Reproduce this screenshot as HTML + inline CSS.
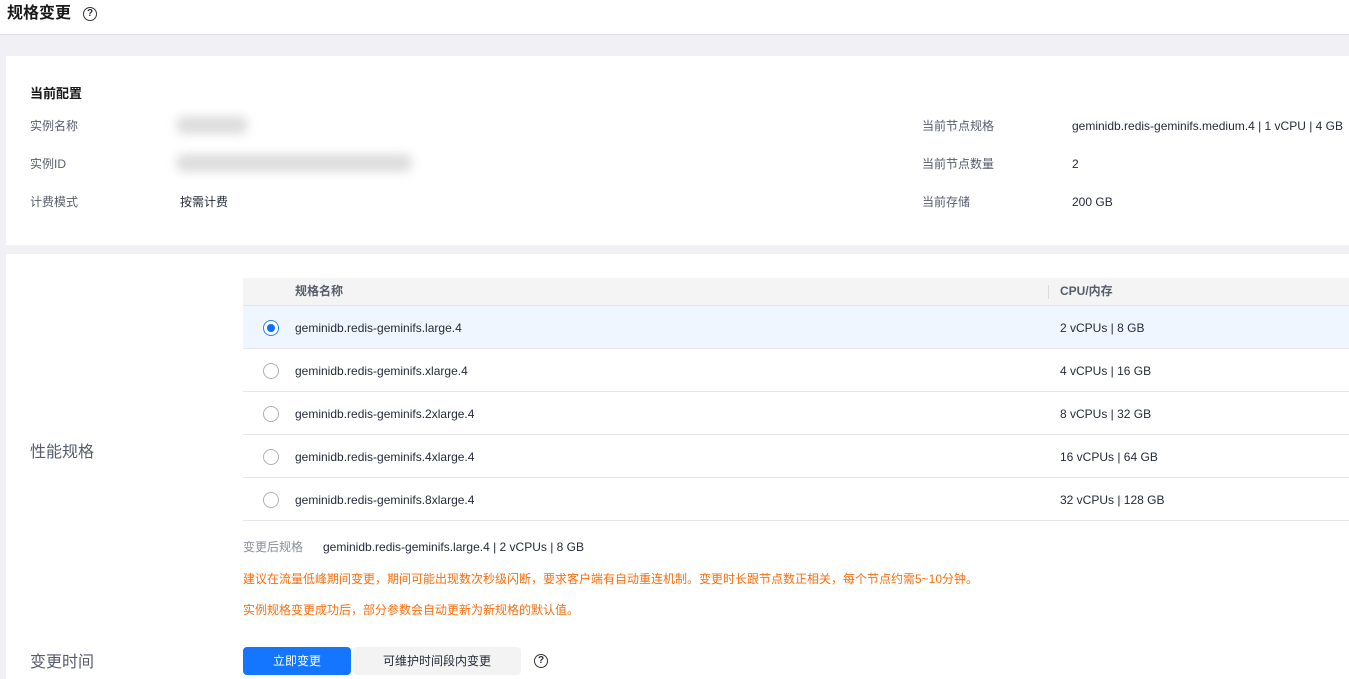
<!DOCTYPE html>
<html><head><meta charset="utf-8"><style>
*{margin:0;padding:0;box-sizing:border-box}
body{width:1349px;height:679px;overflow:hidden;background:#f0f0f5;font-family:"Liberation Sans","Noto Sans CJK SC",sans-serif;font-size:12px;line-height:14px;color:#252b3a;position:relative}
.abs{position:absolute;white-space:nowrap}
.top{position:absolute;left:0;top:0;width:1349px;height:35px;background:#fff;border-bottom:1px solid #dfe1e6}
.p1{position:absolute;left:6px;top:56px;width:1343px;height:189px;background:#fff}
.p2{position:absolute;left:6px;top:254px;width:1343px;height:425px;background:#fff}
.lbl{color:#575d6c}
.blur{position:absolute;background:#ddd;filter:blur(5px);border-radius:8px}
.row{position:absolute;left:243px;width:1106px;height:43px;border-bottom:1px solid #e4e6eb}
.row span{position:absolute;top:15px}
.radio{position:absolute;left:20px;top:14px;width:16px;height:16px;border:1px solid #adb0b8;border-radius:50%;background:#fff}
.q{display:inline-block;width:14px;height:14px;border:1.3px solid #333;border-radius:50%;font-size:10px;line-height:12px;text-align:center;font-weight:bold}
.warn{color:#f66f0f}
.big{font-size:16px;line-height:18px}
</style></head><body>
<div class="top"></div>
<div class="abs big" style="left:7px;top:5px;font-weight:bold;color:#191919">规格变更</div>
<div class="abs q" style="left:83px;top:7px">?</div>
<div class="p1"></div>
<div class="abs" style="left:30px;top:86px;font-size:13px;line-height:15px;font-weight:bold;color:#191919">当前配置</div>
<div class="abs lbl" style="left:30px;top:119px">实例名称</div>
<div class="abs lbl" style="left:30px;top:157px">实例ID</div>
<div class="abs lbl" style="left:30px;top:195px">计费模式</div>
<div class="blur" style="left:176px;top:116px;width:72px;height:18px"></div>
<div class="blur" style="left:176px;top:154px;width:236px;height:18px"></div>
<div class="abs" style="left:180px;top:195px">按需计费</div>
<div class="abs lbl" style="left:922px;top:119px">当前节点规格</div>
<div class="abs lbl" style="left:922px;top:157px">当前节点数量</div>
<div class="abs lbl" style="left:922px;top:195px">当前存储</div>
<div class="abs" style="left:1072px;top:119px">geminidb.redis-geminifs.medium.4 | 1 vCPU | 4 GB</div>
<div class="abs" style="left:1072px;top:157px">2</div>
<div class="abs" style="left:1072px;top:195px">200 GB</div>
<div class="p2"></div>
<div class="abs lbl big" style="left:30px;top:444px">性能规格</div>
<div class="row" style="top:278px;height:28px;background:#f4f4f4;border-bottom:1px solid #e4e6eb">
<span style="left:52px;top:6px;color:#575d6c;font-weight:bold">规格名称</span>
<div style="position:absolute;left:805px;top:7px;width:1px;height:14px;background:#dcdcdc"></div>
<span style="left:817px;top:6px;color:#575d6c;font-weight:bold">CPU/内存</span></div>
<div class="row" style="top:306px;background:#f0f6ff"><div class="radio" style="border-color:#2d7eff"><div style="position:absolute;left:3px;top:3px;width:8px;height:8px;border-radius:50%;background:#0d6dfc"></div></div><span style="left:52px">geminidb.redis-geminifs.large.4</span><span style="left:817px">2 vCPUs | 8 GB</span></div>
<div class="row" style="top:349px"><div class="radio"></div><span style="left:52px">geminidb.redis-geminifs.xlarge.4</span><span style="left:817px">4 vCPUs | 16 GB</span></div>
<div class="row" style="top:392px"><div class="radio"></div><span style="left:52px">geminidb.redis-geminifs.2xlarge.4</span><span style="left:817px">8 vCPUs | 32 GB</span></div>
<div class="row" style="top:435px"><div class="radio"></div><span style="left:52px">geminidb.redis-geminifs.4xlarge.4</span><span style="left:817px">16 vCPUs | 64 GB</span></div>
<div class="row" style="top:478px"><div class="radio"></div><span style="left:52px">geminidb.redis-geminifs.8xlarge.4</span><span style="left:817px">32 vCPUs | 128 GB</span></div>
<div class="abs lbl" style="left:243px;top:540px;color:#8a8e99">变更后规格</div>
<div class="abs" style="left:323px;top:540px">geminidb.redis-geminifs.large.4 | 2 vCPUs | 8 GB</div>
<div class="abs warn" style="left:243px;top:572px">建议在流量低峰期间变更，期间可能出现数次秒级闪断，要求客户端有自动重连机制。变更时长跟节点数正相关，每个节点约需5~10分钟。</div>
<div class="abs warn" style="left:243px;top:603px">实例规格变更成功后，部分参数会自动更新为新规格的默认值。</div>
<div class="abs lbl big" style="left:30px;top:654px">变更时间</div>
<div class="abs" style="left:243px;top:647px;width:108px;height:28px;background:#1476ff;color:#fff;border-radius:4px;text-align:center;line-height:28px">立即变更</div>
<div class="abs" style="left:353px;top:647px;width:168px;height:28px;background:#f3f3f3;color:#252b3a;border-radius:4px;text-align:center;line-height:28px">可维护时间段内变更</div>
<div class="abs q" style="left:534px;top:654px">?</div>
</body></html>
